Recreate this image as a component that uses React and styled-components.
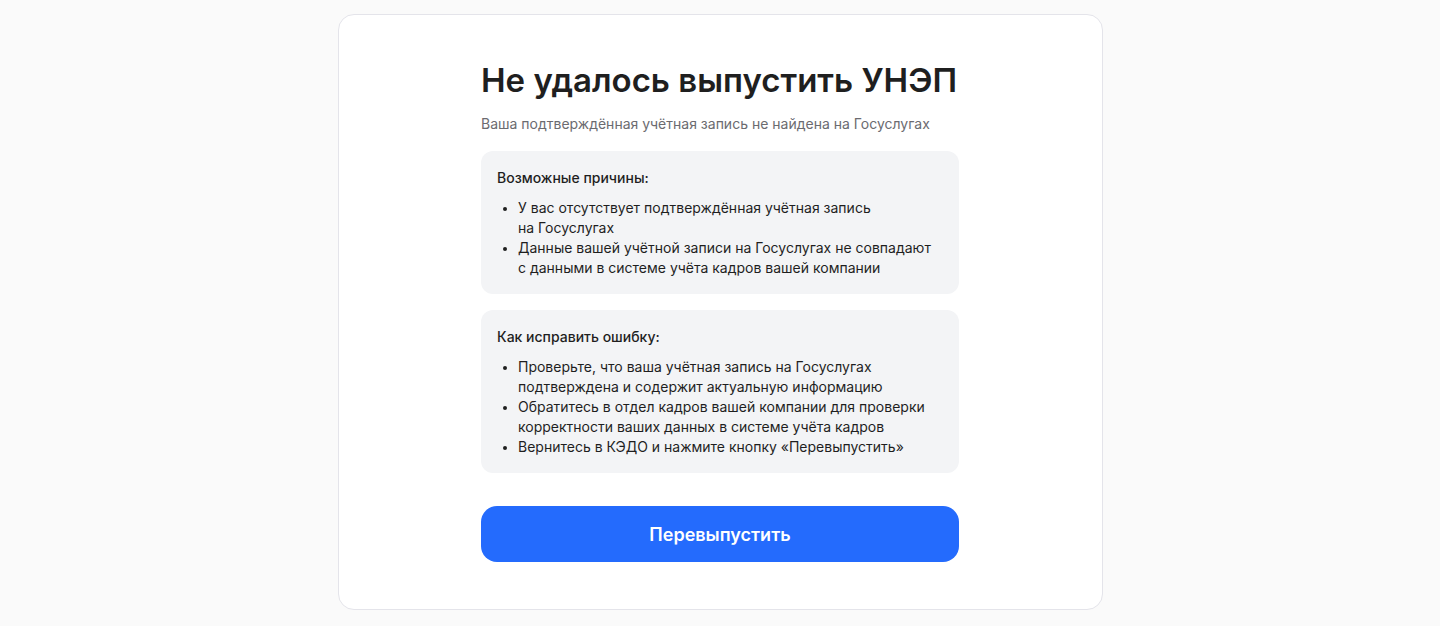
import styled, { createGlobalStyle } from 'styled-components';

const GlobalStyle = createGlobalStyle`
    * { box-sizing: border-box; }
    body {
        margin: 0;
        background: #fafafa;
        font-family: Inter, "Noto Sans", sans-serif;
        color: #1f1f1f;
    }
`

const Page = styled.div`
    display: flex;
    justify-content: center;
    padding: 14px 0;
`
const Card = styled.div`
    width: 765px;
    background: #fff;
    border: 1px solid #e4e4ea;
    border-radius: 16px;
    padding: 43px 0 47px;
    display: flex;
    justify-content: center;
`
const Content = styled.div`
    width: 478px;
    display: flex;
    flex-direction: column;
`
const Title = styled.h1`
    margin: 0;
    font-size: 33px;
    line-height: 44px;
    font-weight: 600;
    color: #1f1f1f;
`
const Subtitle = styled.p`
    margin: 12px 0 0;
    font-size: 14px;
    line-height: 20px;
    color: #6b6b70;
`
const Box = styled.div`
    margin-top: 17px;
    background: #f3f4f6;
    border-radius: 12px;
    padding: 17px 16px 16px;
    & + & {
        margin-top: 16px;
    }
`
const BoxTitle = styled.div`
    font-size: 14px;
    line-height: 20px;
    font-weight: 500;
    color: #1f1f1f;
`
const Ul = styled.ul`
    margin: 10px 0 0;
    padding: 0 12px 0 21px;
`
const Item = styled.li`
    font-size: 14px;
    line-height: 20px;
    color: #1f1f1f;
    &::marker {
        font-size: 13px;
    }
`
const Button = styled.button`
    margin-top: 33px;
    height: 56px;
    border: none;
    border-radius: 16px;
    background: #246bfd;
    color: #fff;
    font-family: Inter, "Noto Sans", sans-serif;
    font-size: 18px;
    font-weight: 600;
    cursor: pointer;
`

const App = () => {
    return (
        <>
            <GlobalStyle />
            <Page>
                <Card>
                    <Content>
                        <Title>Не удалось выпустить УНЭП</Title>
                        <Subtitle>Ваша подтверждённая учётная запись не найдена на Госуслугах</Subtitle>
                        <Box>
                            <BoxTitle>Возможные причины:</BoxTitle>
                            <Ul>
                                <Item>У вас отсутствует подтверждённая учётная запись<br />на Госуслугах</Item>
                                <Item>Данные вашей учётной записи на Госуслугах не совпадают с данными в системе учёта кадров вашей компании</Item>
                            </Ul>
                        </Box>
                        <Box>
                            <BoxTitle>Как исправить ошибку:</BoxTitle>
                            <Ul>
                                <Item>Проверьте, что ваша учётная запись на Госуслугах подтверждена и содержит актуальную информацию</Item>
                                <Item>Обратитесь в отдел кадров вашей компании для проверки корректности ваших данных в системе учёта кадров</Item>
                                <Item>Вернитесь в КЭДО и нажмите кнопку «Перевыпустить»</Item>
                            </Ul>
                        </Box>
                        <Button>Перевыпустить</Button>
                    </Content>
                </Card>
            </Page>
        </>
    );
};

export default App;
